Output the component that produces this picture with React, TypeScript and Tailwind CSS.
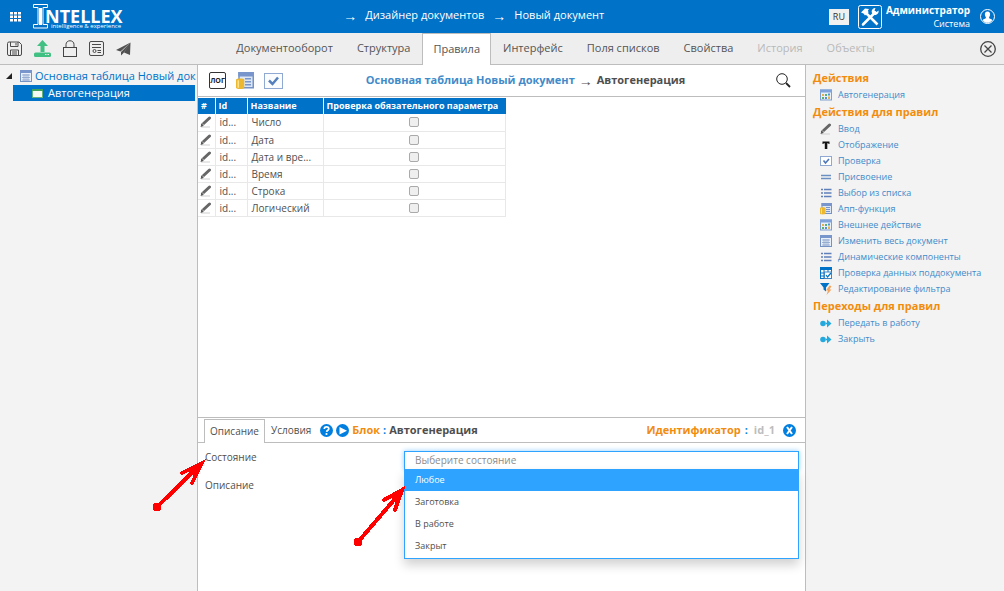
import { useState } from "react";
import type { ReactNode } from "react";

type IconName =
  | "calendar"
  | "pencil"
  | "text"
  | "check"
  | "equals"
  | "list"
  | "app"
  | "table"
  | "subdoc"
  | "filter"
  | "transition";

interface ActionGroup {
  title: string;
  items: { label: string; icon: IconName }[];
}

const tabs = [
  { label: "Документооборот" },
  { label: "Структура" },
  { label: "Правила", active: true },
  { label: "Интерфейс" },
  { label: "Поля списков" },
  { label: "Свойства" },
  { label: "История", disabled: true },
  { label: "Объекты", disabled: true },
];

const params = ["Число", "Дата", "Дата и время", "Время", "Строка", "Логический"];

const states = ["Любое", "Заготовка", "В работе", "Закрыт"];

const groups: ActionGroup[] = [
  {
    title: "Действия",
    items: [{ label: "Автогенерация", icon: "calendar" }],
  },
  {
    title: "Действия для правил",
    items: [
      { label: "Ввод", icon: "pencil" },
      { label: "Отображение", icon: "text" },
      { label: "Проверка", icon: "check" },
      { label: "Присвоение", icon: "equals" },
      { label: "Выбор из списка", icon: "list" },
      { label: "Апп-функция", icon: "app" },
      { label: "Внешнее действие", icon: "calendar" },
      { label: "Изменить весь документ", icon: "table" },
      { label: "Динамические компоненты", icon: "list" },
      { label: "Проверка данных поддокумента", icon: "subdoc" },
      { label: "Редактирование фильтра", icon: "filter" },
    ],
  },
  {
    title: "Переходы для правил",
    items: [
      { label: "Передать в работу", icon: "transition" },
      { label: "Закрыть", icon: "transition" },
    ],
  },
];

const glyphs: Record<IconName, ReactNode> = {
  calendar: (
    <>
      <rect x="0.5" y="1" width="11" height="10" fill="#e8f0fa" stroke="#7f9fcf" />
      <path d="M0 .5h12v3H0z" fill="#7fa3da" />
      <path d="M2 5h2v2H2zM8 7.500h2v2.500H8z" fill="#e9b04a" />
      <path d="M5 5h2v2H5zM2 8h2v2H2z" fill="#59b36a" />
      <path d="M8 4.500h2v2H8zM5 8h2v2H5z" fill="#5590d0" />
    </>
  ),
  pencil: (
    <>
      <path d="M2.500 8.500 9.500 2" stroke="#666" strokeWidth="3" strokeLinecap="round" />
      <path d="M1 11h9" stroke="#cfcfcf" />
      <path d="M.5 11 1.500 8l2 2z" fill="#555" />
      <path d="m2.200 7.500 2 2" stroke="#f3f3f3" strokeWidth="0.600" />
    </>
  ),
  text: <path d="M2.500 2.500h7V5H8.800q-.1-.8-1-.8H7.300V10h-2.500V4.200h-.6q-.9 0-1 .8h-.7z" fill="#111" />,
  check: (
    <>
      <rect x="0.5" y="1.500" width="11" height="9" fill="#fff" stroke="#8fa9d3" />
      <path d="m3.500 5.500 2 2.500 3.500-4" fill="none" stroke="#4f78b8" strokeWidth="1.600" />
    </>
  ),
  equals: <path d="M1 4.500h10M1 7.500h10" stroke="#6c8fc2" strokeWidth="1.400" />,
  list: (
    <path
      d="M1 2.500h2M1 6h2M1 9.500h2M4 2.500h7.500M4 6h7.500M4 9.500h7.500"
      stroke="#6080bb"
      strokeWidth="1.600"
    />
  ),
  app: (
    <>
      <rect x="2" y="0.500" width="9.500" height="10" fill="#dce6f5" stroke="#7592c6" />
      <path d="M1.500 0H12v3H1.500z" fill="#7896cc" />
      <path d="M6 4.500h4M6 6.500h4M6 8.500h4" stroke="#7896cc" />
      <path d="M0 5C0 4 5.500 4 5.500 5v5.500c0 1.200-5.500 1.200-5.500 0z" fill="#ecb731" />
      <path d="M1.500 5.500v5" stroke="#fbe28e" />
    </>
  ),
  table: (
    <>
      <rect x="0.5" y="0.5" width="11" height="11" fill="#eaf0fa" stroke="#7592c6" />
      <path d="M0 0h12v3H0z" fill="#7896cc" />
      <path d="M2 5h8M2 7.500h8M2 10h8M4 4v7M6 4v7M8 4v7" stroke="#8aa2cc" strokeWidth="0.800" />
    </>
  ),
  subdoc: (
    <>
      <rect x="0.5" y="0.5" width="11" height="11" fill="#fff" stroke="#0072c8" />
      <path d="M0 0h12v3H0z" fill="#0072c8" />
      <path d="M1 6h4M1 9h4M4 3v8M8 3v2" stroke="#0072c8" />
      <rect x="4.500" y="5" width="7" height="6.500" fill="#fff" stroke="#3f86c4" />
      <path d="m6 8 1.500 2L11 6" fill="none" stroke="#0072c8" strokeWidth="1.200" />
    </>
  ),
  filter: (
    <>
      <path d="M0 0h9.500L6 4.500v4l-2.500-2v-2z" fill="#0072c8" />
      <path d="M9.500 2.500 6 7.500h2L6.500 12 11.500 6.500h-2L11.500 3z" fill="#f2a35e" />
    </>
  ),
  transition: (
    <>
      <circle cx="3" cy="6.500" r="2.800" fill="#25a9dd" />
      <path d="M7 2.500 11.500 6.500 7 10.500z" fill="#25a9dd" />
      <path d="M6 6.500h3" stroke="#25a9dd" strokeWidth="1.600" />
    </>
  ),
};

function Icon({ name, className = "h-3 w-3" }: { name: IconName; className?: string }) {
  return (
    <svg viewBox="0 0 12 12" className={`shrink-0 ${className}`} aria-hidden="true">
      {glyphs[name]}
    </svg>
  );
}

function Header() {
  return (
    <header className="flex h-[33px] items-center bg-[#0072c8] text-white">
      <button aria-label="Меню" className="ml-[10px]">
        <svg width="11" height="10" viewBox="0 0 11 10" fill="#fff">
          {[0, 4, 8].map((x) =>
            [0, 3.5, 7].map((y) => <rect key={`${x}-${y}`} x={x} y={y} width="3" height="2.500" />)
          )}
        </svg>
      </button>
      <a href="#" className="ml-3 flex items-center">
        <svg width="16" height="25" viewBox="0 0 16 25" fill="none" stroke="#fff">
          <path d="M.5.5h14v3H10v17h4.500v3.500H.500v-3.500H5v-17H.500z" />
          <path d="M7.500 4v17" strokeWidth="3" />
        </svg>
        <span className="-ml-1 flex flex-col pt-[5px]">
          <span className="text-[18px] leading-[14px] font-bold">NTELLEX</span>
          <span className="pl-[6px] text-[6px] leading-[7px]">intelligence &amp; experience</span>
        </span>
      </a>
      <nav className="flex flex-1 items-center justify-center gap-2 pr-1 pb-[2px] text-[11px]">
        <span className="text-[14px]">→</span>
        <a href="#">Дизайнер документов</a>
        <span className="text-[14px]">→</span>
        <a href="#">Новый документ</a>
      </nav>
      <button className="h-4 w-5 bg-[#f0f0f0] text-[9px] leading-4 text-[#333]">RU</button>
      <button aria-label="Инструменты" className="ml-[9px]">
        <svg width="24" height="24" viewBox="0 0 24 24">
          <rect x="0.5" y="0.5" width="23" height="23" rx="2" fill="none" stroke="#fff" />
          <path d="m6.500 6.500 13 13" stroke="#fff" strokeWidth="2.500" />
          <path d="M3 7.500 7 3.500l4 .5-1 1.500.5 2L7 10.500 5.500 8.500z" fill="#fff" />
          <path d="M5 19.500 17 7.500" stroke="#fff" strokeWidth="2.500" strokeLinecap="round" />
          <path d="M20.500 5.500a3.500 3.500 0 1 1-3-2.500L16.500 5.500l2 1.500z" fill="#fff" />
        </svg>
      </button>
      <div className="ml-1 text-right text-[10px] leading-[13px]">
        <div className="font-bold">Администратор</div>
        <div className="text-[9px]">Система</div>
      </div>
      <button aria-label="Профиль" className="mr-[9px] ml-[10px]">
        <svg width="15" height="15" viewBox="0 0 15 15">
          <circle cx="7.500" cy="7.500" r="7" fill="none" stroke="#fff" />
          <path
            d="M7.500 2.500c2 0 2.800 1.500 2.600 3.200-.1 1.300-.7 1.900-1 2.500-.1.800.2 1.200 1 1.500 1 .3 1.900.7 2.200 1.500-2.500 3.400-7.300 3.400-9.600 0 .3-.8 1.200-1.200 2.200-1.500.8-.3 1.100-.7 1-1.500-.3-.6-.9-1.200-1-2.500-.2-1.700.6-3.200 2.600-3.200z"
            fill="#fff"
          />
        </svg>
      </button>
    </header>
  );
}

function Toolbar() {
  return (
    <div className="flex h-8 items-stretch border-b border-[#bdbdbd] bg-[#eee] text-[#555]">
      <div className="flex items-center gap-3 pl-[7px]">
        <button aria-label="Сохранить">
          <svg width="15" height="16" viewBox="0 0 15 16" fill="none" stroke="#4a4a4a">
            <path d="M.5 2.500q0-1.500 1.500-1.500h10l2.500 2.500V13q0 1.500-1.500 1.500H2Q.500 14.500.500 13z" />
            <path d="M3.500 1v4.500h7.500V1M9 2v2.500M3.500 14.500V9h8v5.500M5 11h5M5 13h5" />
          </svg>
        </button>
        <button aria-label="Загрузить">
          <svg width="17" height="17" viewBox="0 0 17 17" fill="#41c083">
            <path d="M8.500 0 14 6h-3.500v6h-4V6H3z" />
            <rect x="0" y="12.500" width="17" height="4.500" rx="1.500" />
            <path d="M11 14.500h1.500M13.500 14.500H15" stroke="#eee" />
          </svg>
        </button>
        <button aria-label="Заблокировать">
          <svg width="14" height="17" viewBox="0 0 14 17" fill="none" stroke="#444">
            <rect x="0.500" y="7.500" width="13" height="9" />
            <path d="M3 7.500V4.500C3 -.500 11-.500 11 4.500v3" />
          </svg>
        </button>
        <button aria-label="Документ">
          <svg width="15" height="15" viewBox="0 0 15 15" fill="none" stroke="#4a4a4a">
            <rect x="0.500" y="0.500" width="14" height="14" rx="1.500" />
            <path d="M3 3.500h9M3 6.500h9M8.500 9.500H12M8.500 11.500H12" />
            <circle cx="5.500" cy="10" r="1.500" />
          </svg>
        </button>
        <button aria-label="Отправить">
          <svg width="15" height="14" viewBox="0 0 15 14" fill="#505050">
            <path d="M14.500.5 0 8l4.500 1.500zM14.500.5 5 10v3.500l2.500-2.500zM14.500.5 8 10.500l6 2.500z" />
          </svg>
        </button>
      </div>
      <nav className="flex flex-1 justify-center text-[11px]">
        {tabs.map((tab) => (
          <button
            key={tab.label}
            disabled={tab.disabled}
            className={
              tab.active
                ? "-mb-px border-x border-t border-[#bdbdbd] bg-white px-[10px]"
                : tab.disabled
                  ? "px-3 text-[#b9b9b9]"
                  : "px-3"
            }
          >
            {tab.label}
          </button>
        ))}
      </nav>
      <button aria-label="Закрыть" className="pr-2">
        <svg width="16" height="16" viewBox="0 0 16 16" fill="none" stroke="#444" strokeWidth="1.300">
          <circle cx="8" cy="8" r="7.300" />
          <path d="m4.500 4.500 7 7M11.500 4.500l-7 7" />
        </svg>
      </button>
    </div>
  );
}

function Tree() {
  return (
    <aside className="w-[198px] shrink-0 border-r border-[#bdbdbd] pt-[3px] text-[11px] leading-4">
      <div className="flex items-center pb-px pl-[6px] text-[#0072c8]">
        <svg width="6" height="6" viewBox="0 0 6 6" className="mr-2 shrink-0">
          <path d="M6 0v6H0z" fill="#222" />
        </svg>
        <Icon name="table" />
        <a href="#" className="ml-[3px] whitespace-nowrap">
          Основная таблица Новый док
        </a>
      </div>
      <div className="mr-[2px] ml-[13px] flex items-center bg-[#0072c8] pl-[19px] text-white">
        <svg width="11" height="9" viewBox="0 0 11 9">
          <rect x="0.500" y="0.500" width="10" height="8" fill="#f4faf2" stroke="#63b37c" />
          <path d="M0 0h11v2H0z" fill="#3f9f5d" />
        </svg>
        <a href="#" className="ml-[5px]">
          Автогенерация
        </a>
      </div>
    </aside>
  );
}

function TitleBar() {
  return (
    <div className="flex h-8 shrink-0 items-center border-b border-[#bdbdbd] pr-[14px] pl-[11px]">
      <div className="flex items-center gap-[10px]">
        <button className="h-[17px] w-[17px] rounded-[2px] border border-[#333] text-[7px] leading-[15px] font-bold text-[#222]">
          ЛОГ
        </button>
        <button aria-label="Апп-функция">
          <Icon name="app" className="h-[18px] w-[18px]" />
        </button>
        <button aria-label="Проверка">
          <svg width="19" height="16" viewBox="0 0 19 16">
            <rect x="0.500" y="0.500" width="18" height="15" fill="#fbfcfe" stroke="#8fa9d3" />
            <path d="m5 7.500 3.500 3.500 5.500-6.500" fill="none" stroke="#5580bd" strokeWidth="2.500" />
          </svg>
        </button>
      </div>
      <h1 className="flex flex-1 items-center justify-center gap-1 pr-2 text-[11px] font-bold text-[#4f4f4f]">
        <a href="#" className="text-[#428bca]">
          Основная таблица Новый документ
        </a>
        <span className="text-[14px] font-normal">→</span>
        <span>Автогенерация</span>
      </h1>
      <button aria-label="Поиск">
        <svg width="15" height="15" viewBox="0 0 15 15" fill="none" stroke="#222">
          <circle cx="6" cy="6" r="5.300" />
          <path d="m10 10 4 4" strokeWidth="1.800" />
        </svg>
      </button>
    </div>
  );
}

function ParamsTable() {
  return (
    <table className="mt-px w-[308px] table-fixed border-collapse text-left text-[10px] text-[#4f4f4f]">
      <thead>
        <tr className="h-4 bg-[#0072c8] text-[9px] text-white">
          <th className="w-[17px] border-r border-white px-[3px] leading-4">#</th>
          <th className="w-8 border-r border-white px-[3px] leading-4">Id</th>
          <th className="w-[76px] border-r border-white px-[3px] leading-4">Название</th>
          <th className="px-[3px] leading-4 whitespace-nowrap">
            Проверка обязательного параметра
          </th>
        </tr>
      </thead>
      <tbody>
        {params.map((name) => (
          <tr key={name} className="h-[17px] border-b border-[#e8e8e8]">
            <td className="border-r border-[#e8e8e8] pl-[2px]">
              <Icon name="pencil" />
            </td>
            <td className="border-r border-[#e8e8e8] pl-1 leading-4">id...</td>
            <td className="border-r border-[#e8e8e8] pl-1 leading-4">
              {name.length > 10 ? `${name.slice(0, 10)}...` : name}
            </td>
            <td className="border-r border-[#e8e8e8]">
              <input
                type="checkbox"
                aria-label={name}
                className="mx-auto block h-[10px] w-[10px] appearance-none rounded-[2px] border border-[#aaa] bg-[#efefef]"
              />
            </td>
          </tr>
        ))}
      </tbody>
    </table>
  );
}

function StateSelect() {
  const [open, setOpen] = useState(true);
  const [value, setValue] = useState("");
  const [hovered, setHovered] = useState(states[0]);

  const pick = (state: string) => {
    setValue(state);
    setOpen(false);
  };

  return (
    <div className="relative flex-1">
      <select
        id="state"
        value={value}
        onChange={(e) => setValue(e.target.value)}
        onMouseDown={(e) => {
          e.preventDefault();
          setOpen(!open);
        }}
        className="block h-[19px] w-full appearance-none border border-[#2ea3ff] bg-white px-[10px] text-[10px] text-[#8c8c8c] shadow-[0_0_5px_#8fcbff] outline-none"
      >
        <option value="">Выберите состояние</option>
        {states.map((state) => (
          <option key={state}>{state}</option>
        ))}
      </select>
      {open && (
        <ul
          role="listbox"
          className="absolute inset-x-0 top-[18px] z-10 border border-t-0 border-[#2ea3ff] bg-white pb-px text-[9px] shadow-[0_6px_10px_rgba(0,0,0,0.18)]"
        >
          {states.map((state) => (
            <li
              key={state}
              role="option"
              aria-selected={state === hovered}
              onMouseEnter={() => setHovered(state)}
              onClick={() => pick(state)}
              className={
                state === hovered
                  ? "bg-[#2ea3ff] px-[10px] leading-[22px] text-white"
                  : "px-[10px] leading-[22px]"
              }
            >
              {state}
            </li>
          ))}
        </ul>
      )}
    </div>
  );
}

// Hand-drawn pointers over the properties form
function Pointers() {
  return (
    <svg
      width="262"
      height="96"
      viewBox="148 455 262 96"
      shapeRendering="crispEdges"
      className="pointer-events-none absolute top-[37px] -left-[50px] z-20"
      aria-hidden="true"
    >
      <g stroke="#f00" strokeWidth="4" fill="none" strokeLinecap="round">
        <path d="M157 507 200 465M182 473 202 463 192 483" />
        <path d="M358 542 400 493M384 500 402 490 395 510" />
      </g>
      <path d="M204 461 188 471 195 478zM404 488 390 497 396 503z" fill="#f00" />
      <circle cx="157" cy="507" r="4.500" fill="#f00" />
      <circle cx="358" cy="542" r="4.500" fill="#f00" />
    </svg>
  );
}

function BlockPanel() {
  return (
    <section className="relative min-h-[174px] border-t border-[#bdbdbd] text-[10px] text-[#4f4f4f]">
      <div className="flex h-[25px] items-stretch border-b border-[#bdbdbd] pt-px pl-[6px]">
        <button className="-mb-px border-x border-t border-[#bdbdbd] bg-white px-[5px]">
          Описание
        </button>
        <button className="px-[6px]">Условия</button>
        <div className="ml-[3px] flex items-center gap-[3px]">
          <button aria-label="Справка">
            <svg width="13" height="13" viewBox="0 0 13 13">
              <circle cx="6.500" cy="6.500" r="6.500" fill="#007fe0" />
              <path
                d="M4.300 5c0-3 4.500-2.800 4.500-.3 0 1.500-2 1.500-2.200 3.200"
                fill="none"
                stroke="#fff"
                strokeWidth="1.700"
              />
              <circle cx="6.500" cy="10" r="1.100" fill="#fff" />
            </svg>
          </button>
          <button aria-label="Запустить">
            <svg width="13" height="13" viewBox="0 0 13 13">
              <circle cx="6.500" cy="6.500" r="6.500" fill="#007fe0" />
              <path d="M3.500 3v7.500l7.500-3.700z" fill="#fff" />
            </svg>
          </button>
        </div>
        <div className="ml-[3px] flex flex-1 items-center text-[11px] font-bold">
          <span className="text-[#f28c0f]">Блок</span>
          <span className="mx-[3px] text-[#007fe0]">:</span>
          <span>Автогенерация</span>
        </div>
        <div className="flex items-center pr-[9px] text-[11px] font-bold">
          <span className="text-[#f28c0f]">Идентификатор</span>
          <span className="ml-1 text-[#007fe0]">:</span>
          <span className="mr-2 ml-[6px] text-[#bdbdbd]">id_1</span>
          <button aria-label="Закрыть блок">
            <svg width="13" height="13" viewBox="0 0 13 13">
              <circle cx="6.500" cy="6.500" r="6.500" fill="#007fe0" />
              <path d="m4 3 5 7M9 3l-5 7" stroke="#fff" strokeWidth="2" />
            </svg>
          </button>
        </div>
      </div>
      <div className="flex flex-col gap-[5px] pt-2 pr-[6px] pl-[7px]">
        <div className="flex items-start">
          <label htmlFor="state" className="w-[199px] leading-3">
            Состояние
          </label>
          <StateSelect />
        </div>
        <div className="flex items-center">
          <label htmlFor="description" className="w-[199px] leading-3">
            Описание
          </label>
          <input id="description" className="h-[19px] flex-1 border border-[#ccc] px-[10px]" />
        </div>
      </div>
      <Pointers />
    </section>
  );
}

function Actions() {
  return (
    <aside className="w-[199px] shrink-0 border-l border-[#bdbdbd] pt-1 pl-[7px]">
      {groups.map((group) => (
        <section key={group.title}>
          <h2 className="text-[11px] leading-[18px] font-bold text-[#f28c0f]">{group.title}</h2>
          <ul>
            {group.items.map((item) => (
              <li key={item.label}>
                <a
                  href="#"
                  className="flex items-center gap-[6px] pl-[7px] text-[9px] leading-4 whitespace-nowrap text-[#428bca]"
                >
                  <Icon name={item.icon} />
                  {item.label}
                </a>
              </li>
            ))}
          </ul>
        </section>
      ))}
    </aside>
  );
}

export default function App() {
  return (
    <div className="flex min-h-screen flex-col bg-[#f3f3f3] font-['Open_Sans',sans-serif]">
      <Header />
      <Toolbar />
      <div className="flex flex-1">
        <Tree />
        <main className="flex min-w-0 flex-1 flex-col bg-white">
          <TitleBar />
          <div className="flex-1">
            <ParamsTable />
          </div>
          <BlockPanel />
        </main>
        <Actions />
      </div>
    </div>
  );
}
